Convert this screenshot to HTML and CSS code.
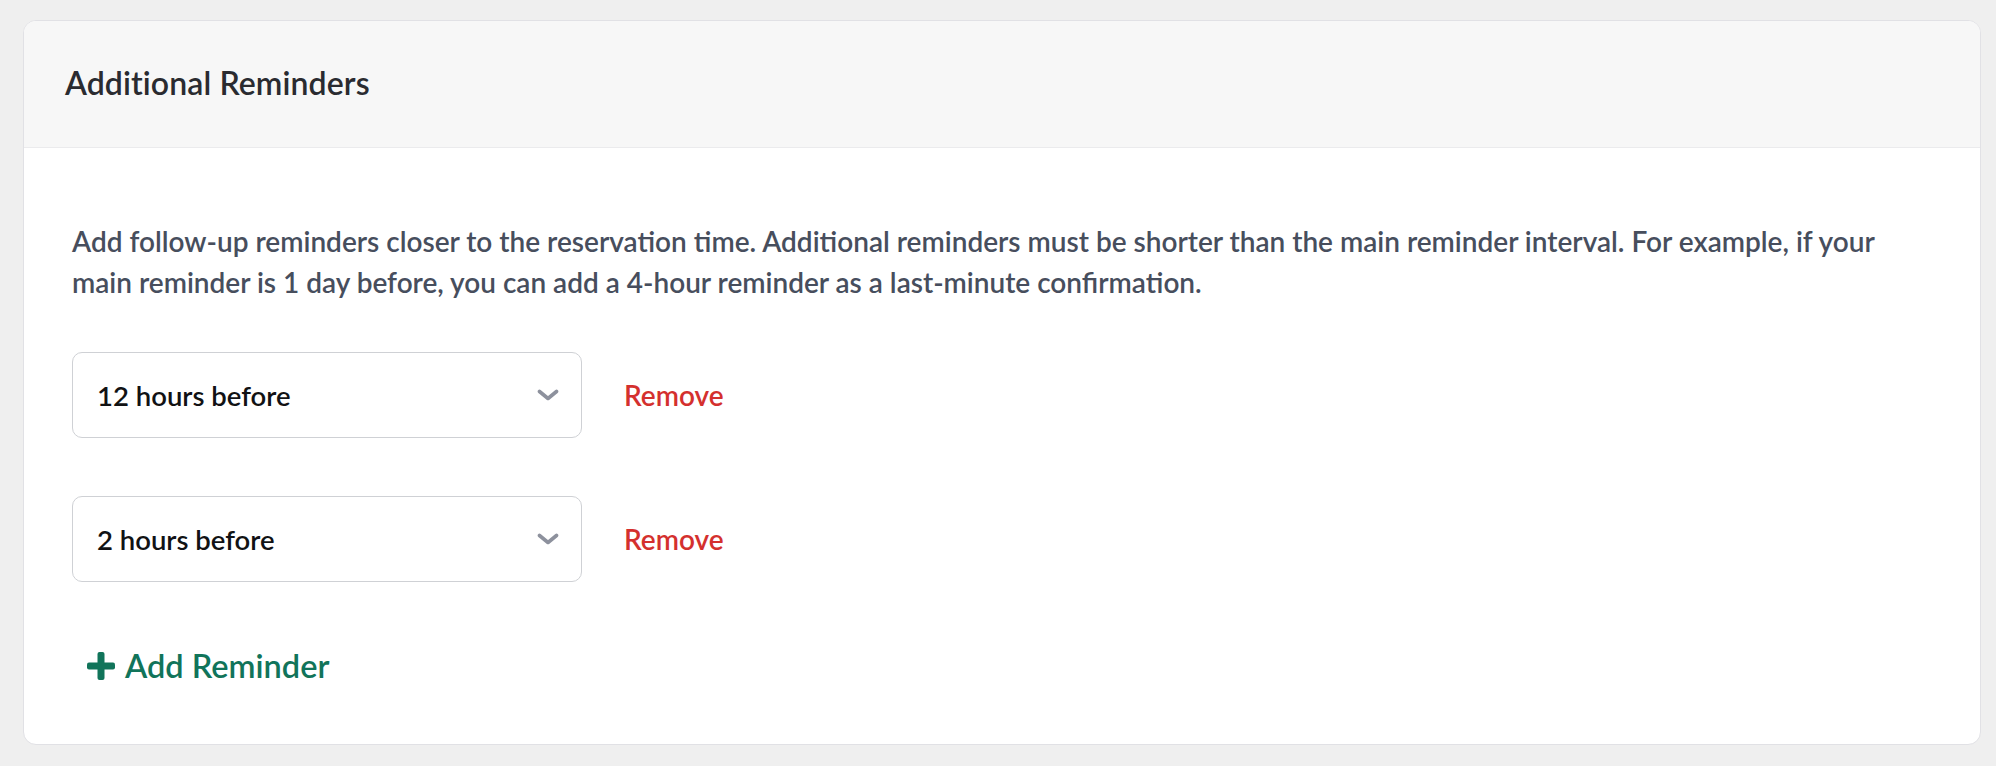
FILE: index.html
```html
<!DOCTYPE html>
<html lang="en">
<head>
<meta charset="utf-8">
<title>Additional Reminders</title>
<link rel="stylesheet" href="styles.css">
</head>
<body>
<section class="card">
  <header class="card-header">
    <h2 class="card-title">Additional Reminders</h2>
  </header>
  <div class="card-body">
    <p class="desc">Add follow-up reminders closer to the reservation time. Additional reminders must be shorter than the main reminder interval. For example, if your main reminder is 1 day before, you can add a 4-hour reminder as a last-minute confirmation.</p>
    <div class="reminders">
      <div class="reminder-row">
        <div class="select">
          <span class="select-value">12 hours before</span>
          <svg class="chevron" width="22" height="12" viewBox="0 0 22 12"><path d="M2.5 2.5 L11 9.5 L19.5 2.5" fill="none" stroke="#8d919d" stroke-width="3.6" stroke-linecap="round" stroke-linejoin="round"/></svg>
        </div>
        <a class="remove" href="#">Remove</a>
      </div>
      <div class="reminder-row">
        <div class="select">
          <span class="select-value">2 hours before</span>
          <svg class="chevron" width="22" height="12" viewBox="0 0 22 12"><path d="M2.5 2.5 L11 9.5 L19.5 2.5" fill="none" stroke="#8d919d" stroke-width="3.6" stroke-linecap="round" stroke-linejoin="round"/></svg>
        </div>
        <a class="remove" href="#">Remove</a>
      </div>
    </div>
    <a class="add" href="#">
      <svg class="plus" width="28" height="28" viewBox="0 0 28 28"><rect x="10.5" y="0" width="7" height="28" rx="2" fill="#11745a"/><rect x="0" y="10.5" width="28" height="7" rx="2" fill="#11745a"/></svg>
      <span>Add Reminder</span>
    </a>
  </div>
</section>
</body>
</html>
```

FILE: styles.css
```css
html, body {
  margin: 0;
  padding: 0;
}
body {
  background: #efefef;
  font-family: "Lato", "Liberation Sans", sans-serif;
  width: 1996px;
  height: 766px;
  overflow: hidden;
  padding-top: 20px;
  padding-left: 23px;
  box-sizing: border-box;
}
.card {
  width: 1958px;
  height: 725px;
  box-sizing: border-box;
  background: #fff;
  border: 1.5px solid #e1e1e5;
  border-radius: 13px;
  overflow: hidden;
  display: flex;
  flex-direction: column;
}
.card-header {
  height: 127px;
  flex: none;
  background: #f7f7f7;
  border-bottom: 1.5px solid #ebebed;
  display: flex;
  align-items: center;
  padding-left: 41px;
  box-sizing: border-box;
}
.card-title {
  margin: 0;
  margin-top: -3px;
  font-size: 32px;
  font-weight: 600;
  color: #2a2b30;
  letter-spacing: 0.1px;
}
.card-body {
  padding: 73px 56px 0 48px;
  display: flex;
  flex-direction: column;
  align-items: flex-start;
}
.desc {
  margin: 0;
  font-size: 28px;
  line-height: 41px;
  font-weight: 600;
  color: #474e5d;
}
.reminders {
  margin-top: 49px;
  display: flex;
  flex-direction: column;
  gap: 58px;
}
.reminder-row {
  display: flex;
  align-items: center;
  gap: 42px;
}
.select {
  width: 510px;
  height: 86px;
  box-sizing: border-box;
  border: 1.5px solid #cfd1d5;
  border-radius: 10px;
  display: flex;
  align-items: center;
  justify-content: space-between;
  padding: 0 22px 0 24px;
}
.select-value {
  font-size: 27.5px;
  font-weight: 600;
  color: #111214;
}
.chevron {
  display: block;
}
.remove {
  font-size: 28px;
  font-weight: 600;
  color: #d4302e;
  text-decoration: none;
}
.add {
  margin-top: 64px;
  margin-left: 15px;
  display: flex;
  align-items: center;
  gap: 10px;
  font-size: 32.5px;
  font-weight: 600;
  color: #11745a;
  text-decoration: none;
}
.plus {
  display: block;
}
```
